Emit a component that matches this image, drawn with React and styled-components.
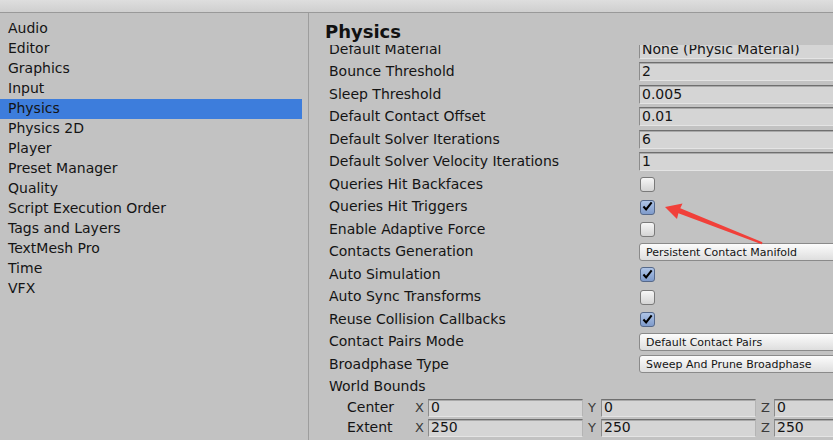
import React from 'react';
import styled, { createGlobalStyle } from 'styled-components';

const Global = createGlobalStyle`
  html, body { margin: 0; padding: 0; overflow: hidden; background: #c2c2c2; }
  body { font-family: "DejaVu Sans", Verdana, sans-serif; color: #141414; }
  * { box-sizing: border-box; }
`;

const Window = styled.div`
  position: relative;
  width: 833px;
  height: 440px;
  display: flex;
  flex-direction: column;
  overflow: hidden;
  background: #c2c2c2;
`;

const TopBar = styled.div`
  flex: none;
  height: 13px;
  background: linear-gradient(#dedede, #cfcfcf);
  border-bottom: 1px solid #999;
`;

const Body = styled.div`
  flex: 1;
  display: flex;
  min-height: 0;
`;

const Sidebar = styled.div`
  flex: none;
  width: 309px;
  padding-top: 6px;
  border-right: 1px solid #9d9d9d;
`;

const NavItem = styled.div`
  width: 302px;
  height: 20px;
  padding: 0 0 2px 8px;
  font-size: 14px;
  line-height: 18px;
  white-space: nowrap;
  background: ${p => (p.$active ? '#3d7ddc' : 'transparent')};
`;

const Inspector = styled.div`
  flex: 1;
  min-width: 0;
  display: flex;
  flex-direction: column;
  overflow: hidden;
`;

const Title = styled.div`
  flex: none;
  height: 32px;
  padding: 8px 0 0 16px;
  font-size: 18px;
  font-weight: bold;
  line-height: 22px;
  color: #111;
`;

const ScrollArea = styled.div`
  flex: 1;
  min-height: 0;
  overflow: hidden;
`;

const Content = styled.div`
  width: 626px;
  margin-top: -7.25px;
  padding-left: 20px;
`;

const Row = styled.div`
  display: flex;
  align-items: center;
  height: ${p => (p.$compact ? '20px' : '22.5px')};
  padding-left: ${p => (p.$indent ? '18px' : '0')};
`;

const Label = styled.div`
  flex: none;
  width: ${p => p.$width || '310px'};
  font-size: 14px;
  line-height: 20px;
  padding-bottom: 1px;
  white-space: nowrap;
`;

const Value = styled.div`
  flex: none;
  width: 290px;
  display: flex;
  align-items: center;
`;

const TextField = styled.div`
  flex: 1;
  height: ${p => (p.$small ? '18px' : '19px')};
  padding-left: 2px;
  background: #d5d5d5;
  border: 1px solid;
  border-color: #6f6f6f #b4b4b4 #e4e4e4 #8c8c8c;
  box-shadow: inset 0 1px 0 #a9a9a9;
  font-size: 14px;
  line-height: ${p => (p.$small ? '15px' : '16px')};
  white-space: nowrap;
  overflow: hidden;
`;

const Box = styled.div`
  width: 15px;
  height: 15px;
  margin-left: 1px;
  margin-top: 1px;
  border-radius: 3px;
  border: 1px solid ${p => (p.$checked ? '#56698a' : '#7a7a7a')};
  background: ${p =>
    p.$checked
      ? 'linear-gradient(#aec4e6, #7f9bcb)'
      : 'linear-gradient(#f6f6f6, #d4d4d4)'};
  display: flex;
  align-items: center;
  justify-content: center;
`;

const Dropdown = styled.div`
  flex: 1;
  height: 18px;
  padding-left: 6px;
  border: 1px solid #8a8a8a;
  border-radius: 3px;
  background: linear-gradient(#fcfcfc, #dedede);
  font-size: 11px;
  line-height: 18px;
  white-space: nowrap;
  overflow: hidden;
`;

const VectorGroup = styled.div`
  display: flex;
  gap: 5px;
`;

const Axis = styled.div`
  flex: none;
  display: flex;
  align-items: center;
  width: 168px;
`;

const AxisLetter = styled.span`
  flex: none;
  width: 13px;
  font-size: 13px;
  line-height: 18px;
  color: #3a3a3a;
`;

const Overlay = styled.svg`
  position: absolute;
  left: 0;
  top: 0;
  pointer-events: none;
`;

const Check = ({ checked }) => (
  <Box $checked={checked}>
    {checked && (
      <svg width="15" height="15" viewBox="0 0 15 15" style={{ marginTop: -1 }}>
        <path d="M2.8 7.6 L5.9 10.9 L12.3 2.8" fill="none" stroke="#000" strokeWidth="2.4" strokeLinejoin="miter" />
      </svg>
    )}
  </Box>
);

const navItems = [
  'Audio', 'Editor', 'Graphics', 'Input', 'Physics', 'Physics 2D', 'Player',
  'Preset Manager', 'Quality', 'Script Execution Order', 'Tags and Layers',
  'TextMesh Pro', 'Time', 'VFX',
];

const rows = [
  { label: 'Default Material', type: 'field', value: 'None (Physic Material)' },
  { label: 'Bounce Threshold', type: 'field', value: '2' },
  { label: 'Sleep Threshold', type: 'field', value: '0.005' },
  { label: 'Default Contact Offset', type: 'field', value: '0.01' },
  { label: 'Default Solver Iterations', type: 'field', value: '6' },
  { label: 'Default Solver Velocity Iterations', type: 'field', value: '1' },
  { label: 'Queries Hit Backfaces', type: 'check', value: false },
  { label: 'Queries Hit Triggers', type: 'check', value: true },
  { label: 'Enable Adaptive Force', type: 'check', value: false },
  { label: 'Contacts Generation', type: 'drop', value: 'Persistent Contact Manifold' },
  { label: 'Auto Simulation', type: 'check', value: true },
  { label: 'Auto Sync Transforms', type: 'check', value: false },
  { label: 'Reuse Collision Callbacks', type: 'check', value: true },
  { label: 'Contact Pairs Mode', type: 'drop', value: 'Default Contact Pairs' },
  { label: 'Broadphase Type', type: 'drop', value: 'Sweep And Prune Broadphase' },
];

const vectors = [
  { label: 'Center', values: ['0', '0', '0'] },
  { label: 'Extent', values: ['250', '250', '250'] },
];

export default function App() {
  return (
    <Window>
      <Global />
      <TopBar />
      <Body>
        <Sidebar>
          {navItems.map(n => (
            <NavItem key={n} $active={n === 'Physics'}>{n}</NavItem>
          ))}
        </Sidebar>
        <Inspector>
          <Title>Physics</Title>
          <ScrollArea>
            <Content>
              {rows.map(r => (
                <Row key={r.label}>
                  <Label>{r.label}</Label>
                  <Value>
                    {r.type === 'field' && <TextField>{r.value}</TextField>}
                    {r.type === 'check' && <Check checked={r.value} />}
                    {r.type === 'drop' && <Dropdown>{r.value}</Dropdown>}
                  </Value>
                </Row>
              ))}
              <Row>
                <Label>World Bounds</Label>
              </Row>
              {vectors.map(v => (
                <Row key={v.label} $compact $indent>
                  <Label $width="68px">{v.label}</Label>
                  <VectorGroup>
                    {['X', 'Y', 'Z'].map((a, i) => (
                      <Axis key={a}>
                        <AxisLetter>{a}</AxisLetter>
                        <TextField $small>{v.values[i]}</TextField>
                      </Axis>
                    ))}
                  </VectorGroup>
                </Row>
              ))}
            </Content>
          </ScrollArea>
        </Inspector>
      </Body>
      <Overlay width="833" height="440" viewBox="0 0 833 440">
        <polygon
          points="665,207 682.5,203.5 680.3,208.3 762.5,242.3 761.6,244.2 678.4,213.3 677,219"
          fill="#f1403a"
        />
      </Overlay>
    </Window>
  );
}
